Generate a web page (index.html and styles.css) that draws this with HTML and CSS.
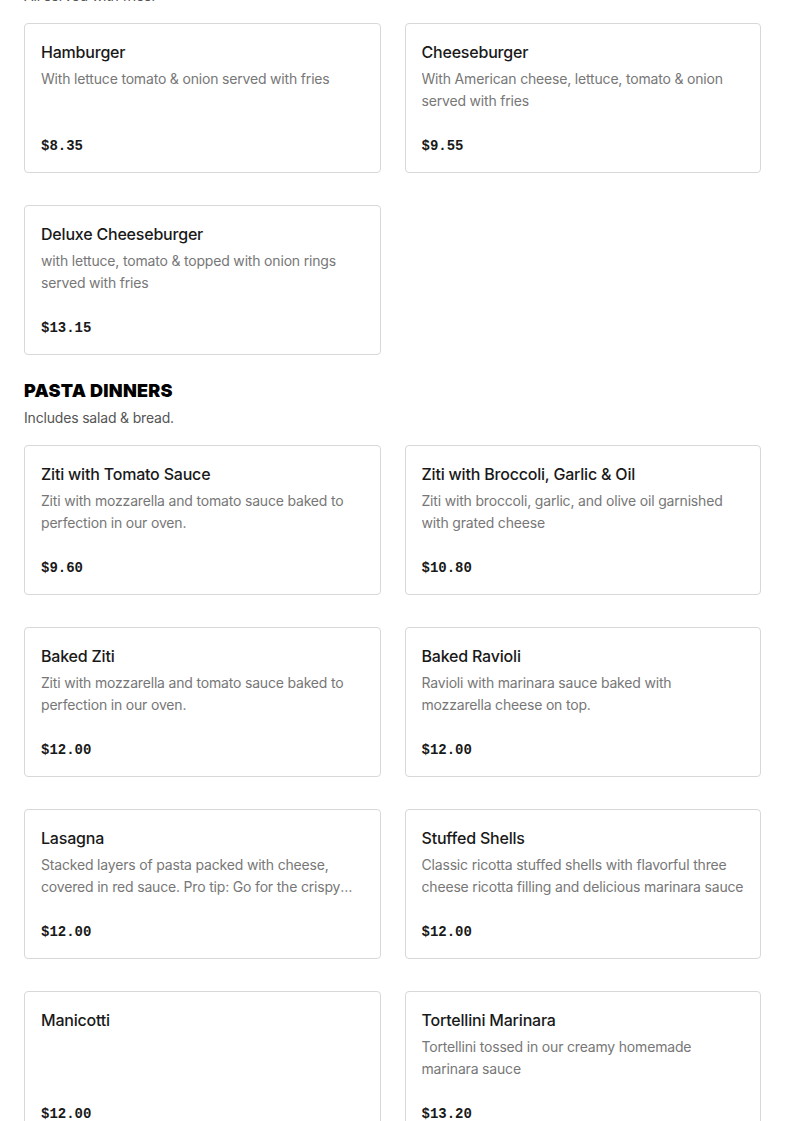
FILE: index.html
```html
<!DOCTYPE html>
<html lang="en">
<head>
<meta charset="utf-8">
<title>Menu</title>
<link rel="stylesheet" href="styles.css">
</head>
<body>
<main class="menu">
  <section class="section section-cut">
    <p class="section-note">All served with fries.</p>
    <div class="grid">
      <article class="card">
        <h3 class="card-title">Hamburger</h3>
        <p class="card-desc">With lettuce tomato &amp; onion served with fries</p>
        <div class="card-price">$8.35</div>
      </article>
      <article class="card">
        <h3 class="card-title">Cheeseburger</h3>
        <p class="card-desc">With American cheese, lettuce, tomato &amp; onion served with fries</p>
        <div class="card-price">$9.55</div>
      </article>
      <article class="card">
        <h3 class="card-title">Deluxe Cheeseburger</h3>
        <p class="card-desc">with lettuce, tomato &amp; topped with onion rings served with fries</p>
        <div class="card-price">$13.15</div>
      </article>
    </div>
  </section>

  <section class="section">
    <h2 class="section-title">PASTA DINNERS</h2>
    <p class="section-note">Includes salad &amp; bread.</p>
    <div class="grid">
      <article class="card">
        <h3 class="card-title">Ziti with Tomato Sauce</h3>
        <p class="card-desc">Ziti with mozzarella and tomato sauce baked to perfection in our oven.</p>
        <div class="card-price">$9.60</div>
      </article>
      <article class="card">
        <h3 class="card-title">Ziti with Broccoli, Garlic &amp; Oil</h3>
        <p class="card-desc">Ziti with broccoli, garlic, and olive oil garnished with grated cheese</p>
        <div class="card-price">$10.80</div>
      </article>
      <article class="card">
        <h3 class="card-title">Baked Ziti</h3>
        <p class="card-desc">Ziti with mozzarella and tomato sauce baked to perfection in our oven.</p>
        <div class="card-price">$12.00</div>
      </article>
      <article class="card">
        <h3 class="card-title">Baked Ravioli</h3>
        <p class="card-desc">Ravioli with marinara sauce baked with mozzarella cheese on top.</p>
        <div class="card-price">$12.00</div>
      </article>
      <article class="card">
        <h3 class="card-title">Lasagna</h3>
        <p class="card-desc">Stacked layers of pasta packed with cheese, covered in red sauce. Pro tip: Go for the crispy corner piece, you won't regret it.</p>
        <div class="card-price">$12.00</div>
      </article>
      <article class="card">
        <h3 class="card-title">Stuffed Shells</h3>
        <p class="card-desc">Classic ricotta stuffed shells with flavorful three cheese ricotta filling and delicious marinara sauce</p>
        <div class="card-price">$12.00</div>
      </article>
      <article class="card">
        <h3 class="card-title">Manicotti</h3>
        <p class="card-desc"></p>
        <div class="card-price">$12.00</div>
      </article>
      <article class="card">
        <h3 class="card-title">Tortellini Marinara</h3>
        <p class="card-desc">Tortellini tossed in our creamy homemade marinara sauce</p>
        <div class="card-price">$13.20</div>
      </article>
    </div>
  </section>
</main>
</body>
</html>
```

FILE: styles.css
```css
* { box-sizing: border-box; }

html, body {
  margin: 0;
  padding: 0;
  background: #ffffff;
}

body {
  font-family: Inter, "Liberation Sans", sans-serif;
  color: #191919;
}

.menu {
  padding: 0 24px;
}

.section-cut {
  margin-top: -15px;
}

.section + .section {
  margin-top: 24px;
}

.section-title {
  margin: 0;
  font-size: 18px;
  line-height: 24px;
  font-weight: 900;
  color: #000;
  letter-spacing: 0.25px;
}

.section-note {
  margin: 4px 0 0;
  font-size: 14px;
  line-height: 22px;
  letter-spacing: -0.18px;
  color: #555555;
}

.section-cut .section-note {
  margin-top: 0;
}

.grid {
  margin-top: 16px;
  display: grid;
  grid-template-columns: 1fr 1fr;
  column-gap: 24px;
  row-gap: 32px;
}

.card {
  border: 1px solid #d8d8d8;
  border-radius: 4px;
  padding: 16px 16px 14px;
  display: flex;
  flex-direction: column;
  height: 150px;
}

.card-title {
  margin: 0;
  font-size: 16px;
  line-height: 24px;
  font-weight: 500;
  letter-spacing: -0.2px;
  color: #191919;
}

.card-desc {
  margin: 4px 0 0;
  font-size: 14px;
  line-height: 22px;
  letter-spacing: -0.18px;
  height: 44px;
  color: #777777;
  overflow: hidden;
  display: -webkit-box;
  -webkit-line-clamp: 2;
  -webkit-box-orient: vertical;
}

.card-price {
  margin-top: 22px;
  font-family: "Liberation Mono", monospace;
  font-weight: 700;
  font-size: 14px;
  line-height: 24px;
  color: #191919;
}
```
